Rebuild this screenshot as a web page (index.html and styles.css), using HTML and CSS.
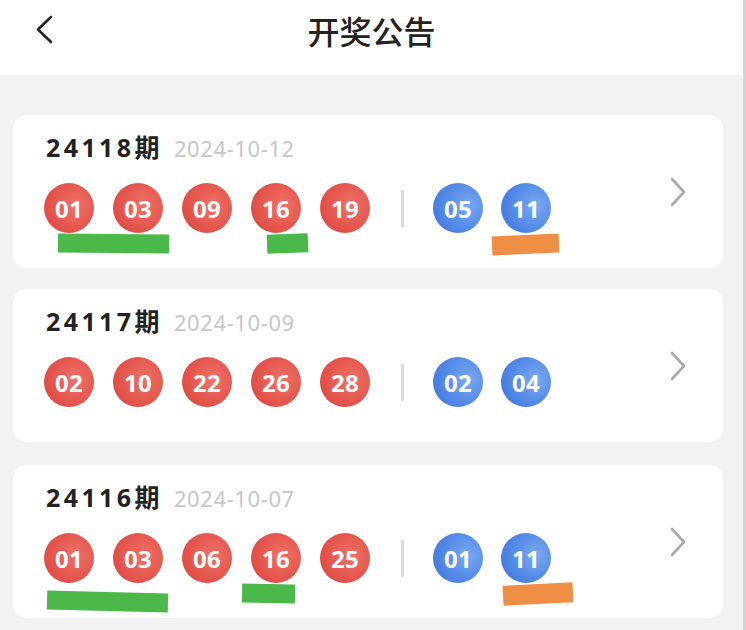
FILE: index.html
```html
<!DOCTYPE html>
<html lang="zh">
<head>
<meta charset="utf-8">
<title>开奖公告</title>
<link rel="stylesheet" href="styles.css">
</head>
<body>
<div class="page">
  <header class="topbar">
    <svg class="back" width="20" height="30" viewBox="0 0 20 30"><polyline points="15,2 2,14.5 15,27" fill="none" stroke="#222" stroke-width="2.6" stroke-linecap="round" stroke-linejoin="round"/></svg>
    <h1 class="title">开奖公告</h1>
  </header>

  <main class="list">
    <section class="card">
      <div class="info">
        <div class="head"><span class="issue">24118期</span><span class="date">2024-10-12</span></div>
        <div class="balls">
          <span class="ball red">01</span><span class="ball red">03</span><span class="ball red">09</span><span class="ball red">16</span><span class="ball red">19</span>
          <span class="sep"></span>
          <span class="ball blue">05</span><span class="ball blue">11</span>
        </div>
      </div>
      <svg class="chev" width="16" height="30" viewBox="0 0 16 30"><polyline points="2,2 14,15 2,28" fill="none" stroke="#a8a8a8" stroke-width="2.6" stroke-linecap="round" stroke-linejoin="round"/></svg>
      <span class="mark green m1a"></span>
      <span class="mark green m1b"></span>
      <span class="mark orange m1c"></span>
    </section>

    <section class="card">
      <div class="info">
        <div class="head"><span class="issue">24117期</span><span class="date">2024-10-09</span></div>
        <div class="balls">
          <span class="ball red">02</span><span class="ball red">10</span><span class="ball red">22</span><span class="ball red">26</span><span class="ball red">28</span>
          <span class="sep"></span>
          <span class="ball blue">02</span><span class="ball blue">04</span>
        </div>
      </div>
      <svg class="chev" width="16" height="30" viewBox="0 0 16 30"><polyline points="2,2 14,15 2,28" fill="none" stroke="#a8a8a8" stroke-width="2.6" stroke-linecap="round" stroke-linejoin="round"/></svg>
    </section>

    <section class="card card3">
      <div class="info">
        <div class="head"><span class="issue">24116期</span><span class="date">2024-10-07</span></div>
        <div class="balls">
          <span class="ball red">01</span><span class="ball red">03</span><span class="ball red">06</span><span class="ball red">16</span><span class="ball red">25</span>
          <span class="sep"></span>
          <span class="ball blue">01</span><span class="ball blue">11</span>
        </div>
      </div>
      <svg class="chev" width="16" height="30" viewBox="0 0 16 30"><polyline points="2,2 14,15 2,28" fill="none" stroke="#a8a8a8" stroke-width="2.6" stroke-linecap="round" stroke-linejoin="round"/></svg>
      <span class="mark green m3a"></span>
      <span class="mark green m3b"></span>
      <span class="mark orange m3c"></span>
    </section>
  </main>
</div>
</body>
</html>
```

FILE: styles.css
```css
* { box-sizing: border-box; }
html, body { margin: 0; padding: 0; }
body {
  background: #f2f2f2;
  font-family: "Noto Sans", "Noto Sans CJK SC", sans-serif;
}
.page {
  width: 746px;
  height: 630px;
  overflow: hidden;
  border-right: 3px solid #d4d4d4;
}
.topbar {
  height: 75px;
  background: #fff;
  display: flex;
  align-items: center;
  justify-content: center;
  position: relative;
}
.back {
  position: absolute;
  left: 36px;
  top: 15px;
}
.title {
  margin: 0 0 16px 0;
  font-family: "Noto Sans CJK SC", sans-serif;
  font-size: 32px;
  font-weight: 500;
  color: #222;
  line-height: 1;
}
.list {
  padding: 40px 20px 0 13px;
  display: flex;
  flex-direction: column;
  gap: 21px;
}
.card3 { margin-top: 2px; }
.card {
  position: relative;
  width: 710px;
  height: 153px;
  background: #fff;
  border-radius: 14px;
  display: flex;
  align-items: center;
  padding: 0 37px 0 31px;
}
.info {
  flex: 1;
  align-self: flex-start;
  padding-top: 15px;
}
.head {
  display: flex;
  align-items: baseline;
  gap: 11px;
  padding-left: 2px;
  height: 34px;
}
.issue {
  font-size: 25px;
  font-weight: 700;
  color: #222;
  letter-spacing: 3.4px;
}
.issue, .date { line-height: 34px; }
.date {
  font-size: 22px;
  color: #c6c6c6;
  letter-spacing: 0.6px;
}
.balls {
  display: flex;
  align-items: center;
  margin-top: 19px;
}
.ball {
  width: 50px;
  height: 50px;
  border-radius: 50%;
  display: flex;
  align-items: center;
  justify-content: center;
  color: #fff;
  font-size: 24px;
  font-weight: 700;
  margin-right: 19px;
  letter-spacing: 0.3px;
}
.ball.red {
  background: radial-gradient(circle at 62% 45%, #ef7268 0%, #e4564d 55%, #d8423b 100%);
}
.ball.blue {
  background: radial-gradient(circle at 70% 45%, #7aa8f2 0%, #5289e6 55%, #3b70d6 100%);
  margin-right: 18px;
}
.sep {
  width: 3px;
  height: 37px;
  background: #dadada;
  margin: 0 29px 0 12px;
}
.chev {
  flex: none;
}
.mark {
  position: absolute;
  display: block;
}
.green { background: #4cb84a; }
.orange { background: #ef8f45; }
.m1a { left: 45px; top: 119px; width: 111px; height: 19px; transform: rotate(0.5deg); }
.m1b { left: 254px; top: 119px; width: 41px; height: 19px; transform: rotate(-2deg); }
.m1c { left: 479px; top: 120px; width: 67px; height: 19px; transform: rotate(-2.5deg); }
.m3a { left: 34px; top: 127px; width: 121px; height: 19px; transform: rotate(1.5deg); }
.m3b { left: 229px; top: 119px; width: 53px; height: 19px; transform: rotate(1deg); }
.m3c { left: 490px; top: 119px; width: 70px; height: 20px; transform: rotate(-3deg); }
```
